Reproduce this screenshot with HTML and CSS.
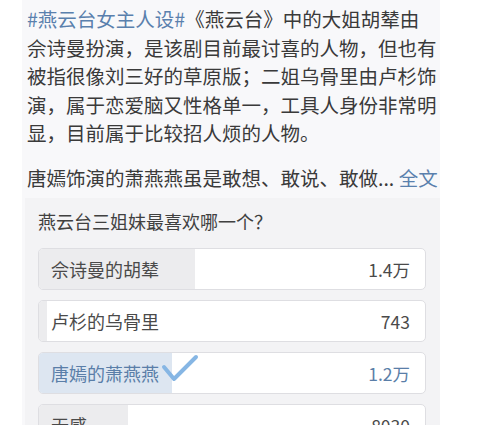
FILE: index.html
```html
<!DOCTYPE html>
<html lang="zh">
<head>
    <meta charset="UTF-8">
    <meta name="viewport" content="width=device-width, initial-scale=1.0">
    <title>燕云台投票</title>
    <link rel="stylesheet" href="styles.css">
</head>
<body>
    <div class="panel">
        <p class="post">
            <span class="tag">#燕云台女主人设#</span>《燕云台》中的大姐胡辇由<br>
            佘诗曼扮演，是该剧目前最讨喜的人物，但也有<br>
            被指很像刘三好的草原版；二姐乌骨里由卢杉饰<br>
            演，属于恋爱脑又性格单一，工具人身份非常明<br>
            显，目前属于比较招人烦的人物。
        </p>
        <p class="post last">唐嫣饰演的萧燕燕虽是敢想、敢说、敢做... <span class="more">全文</span></p>

        <div class="poll">
            <div class="poll-title">燕云台三姐妹最喜欢哪一个？</div>

            <div class="option">
                <div class="fill" style="width: 40.3%"></div>
                <span class="name">佘诗曼的胡辇</span>
                <span class="count">1.4万</span>
            </div>
            <div class="option">
                <div class="fill" style="width: 2.1%"></div>
                <span class="name">卢杉的乌骨里</span>
                <span class="count">743</span>
            </div>
            <div class="option voted">
                <div class="fill" style="width: 34.5%"></div>
                <span class="name">唐嫣的萧燕燕</span>
                <svg class="check" width="38" height="32" viewBox="0 0 38 32">
                    <path d="M3 13 L13 25 L35 3" fill="none" stroke="#86b6e4" stroke-width="4" stroke-linecap="round" stroke-linejoin="round"/>
                </svg>
                <span class="count">1.2万</span>
            </div>
            <div class="option">
                <div class="fill" style="width: 23.1%"></div>
                <span class="name">无感</span>
                <span class="count">8030</span>
            </div>
        </div>
    </div>
</body>
</html>
```

FILE: styles.css
```css
body {
    margin: 0;
    background-color: #fff;
    font-family: "Noto Sans CJK SC", "Noto Sans", sans-serif;
    color: #3a3a3a;
    overflow: hidden;
}
.panel {
    margin-left: 22px;
    width: 418px;
    min-height: 425px;
    background-color: #f8f8fa;
    padding-top: 5px;
}
.post {
    margin: 0 0 16px 0;
    padding-left: 5px;
    font-size: 19.5px;
    line-height: 28.5px;
    white-space: nowrap;
}
.post.last { margin-bottom: 6px; }
.tag, .more { color: #5a80ad; }

.poll {
    margin: 0 0 0 3px;
    padding: 10px 14px 0 13px;
    background-color: #f3f3f5;
}
.poll-title {
    font-size: 18px;
    line-height: 26px;
    color: #404040;
    margin-bottom: 14px;
}
.option {
    position: relative;
    display: flex;
    align-items: center;
    height: 40px;
    margin-bottom: 10px;
    border: 1px solid #dedee2;
    border-radius: 5px;
    background-color: #fff;
    overflow: hidden;
    font-size: 18px;
    color: #4a4a4a;
    padding: 0 15px 0 12px;
}
.fill {
    position: absolute;
    left: 0;
    top: 0;
    bottom: 0;
    background-color: #ececee;
}
.name, .count, .check { position: relative; }
.count {
    margin-left: auto;
    font-size: 17.5px;
}
.voted { color: #5a7ea8; }
.voted .fill { background-color: #dde6f1; }
.check {
    margin-left: 2px;
    margin-top: -6px;
}
```
